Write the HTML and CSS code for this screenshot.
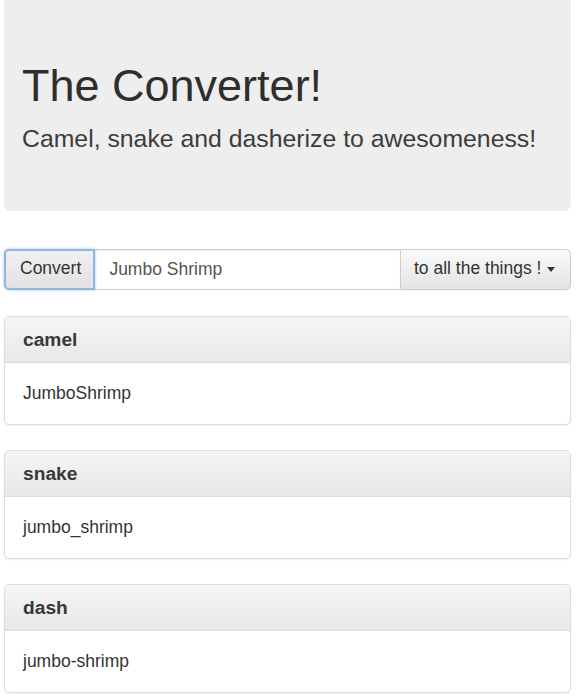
FILE: index.html
```html
<!DOCTYPE html>
<html>
<head>
<meta charset="utf-8">
<title>The Converter!</title>
<link rel="stylesheet" href="styles.css">
</head>
<body>
<div class="container">
  <div class="jumbotron">
    <h1 class="title">The Converter!</h1>
    <p class="lead">Camel, snake and dasherize to awesomeness!</p>
  </div>

  <div class="input-group">
    <button class="btn btn-convert" type="button">Convert</button>
    <input class="field" type="text" value="Jumbo Shrimp">
    <button class="btn btn-dropdown" type="button">to all the things ! <span class="caret"></span></button>
  </div>

  <div class="panel">
    <div class="panel-heading"><h3 class="panel-title">camel</h3></div>
    <div class="panel-body">JumboShrimp</div>
  </div>
  <div class="panel">
    <div class="panel-heading"><h3 class="panel-title">snake</h3></div>
    <div class="panel-body">jumbo_shrimp</div>
  </div>
  <div class="panel">
    <div class="panel-heading"><h3 class="panel-title">dash</h3></div>
    <div class="panel-body">jumbo-shrimp</div>
  </div>
</div>
</body>
</html>
```

FILE: styles.css
```css
* { box-sizing: border-box; }
html, body { margin: 0; padding: 0; background: #fff; }
body {
  font-family: "Liberation Sans", Arial, sans-serif;
  color: #333;
  font-size: 17.5px;
}
.container {
  padding: 0 8px 0 4px;
}
.jumbotron {
  background: #eeeeee;
  border-radius: 0 0 7px 7px;
  padding: 61px 18px 54px;
  margin-bottom: 38px;
}
.title {
  margin: 0 0 11.5px;
  font-size: 45px;
  line-height: 1.1;
  font-weight: normal;
  color: #2e2e2e;
}
.lead {
  margin: 0;
  font-size: 24.8px;
  line-height: 1.4;
  font-weight: normal;
  color: #3c3c3c;
}
.input-group {
  display: flex;
  height: 41px;
  margin-bottom: 26px;
}
.btn {
  font-family: inherit;
  font-size: 17.5px;
  color: #333;
  border: 1px solid #ccc;
  background: linear-gradient(to bottom, #fafafa 0%, #e4e4e4 100%);
  padding: 0 14.4px;
  height: 41px;
  line-height: 1;
  margin: 0;
}
.btn-convert {
  width: 91px;
  border-radius: 5px 0 0 5px;
  border: 2px solid #8fb8dc;
  box-shadow: 0 0 3px rgba(102, 175, 233, 0.7);
  background: linear-gradient(to bottom, #f0f0f0 0%, #e2e2e2 100%);
  position: relative;
  z-index: 1;
  padding: 0 12px 0 14px;
}
.field {
  flex: 1;
  min-width: 0;
  height: 41px;
  border: 1px solid #ccc;
  border-left: 0;
  border-right: 0;
  padding: 0 14.4px;
  font-family: inherit;
  font-size: 17.5px;
  color: #555;
  background: #fff;
  box-shadow: inset 0 1px 1px rgba(0, 0, 0, 0.075);
  outline: none;
}
.btn-dropdown {
  width: 171px;
  border-radius: 0 5px 5px 0;
  text-align: left;
  padding-left: 13px;
  white-space: nowrap;
  box-shadow: 0 1px 1px rgba(0, 0, 0, 0.06);
}
.caret {
  display: inline-block;
  width: 0;
  height: 0;
  margin-left: 1px;
  vertical-align: middle;
  border-top: 5px solid #333;
  border-left: 4px solid transparent;
  border-right: 4px solid transparent;
}
.panel {
  border: 1px solid #dddddd;
  border-radius: 5px;
  box-shadow: 0 1px 2px rgba(0, 0, 0, 0.06);
  margin-bottom: 25px;
  background: #fff;
  overflow: hidden;
}
.panel-heading {
  background: linear-gradient(to bottom, #f5f5f5 0%, #e8e8e8 100%);
  border-bottom: 1px solid #dddddd;
  padding: 12px 18px;
}
.panel-title {
  margin: 0;
  font-size: 19.2px;
  line-height: 21px;
  font-weight: bold;
  color: #383838;
}
.panel-body {
  padding: 18px 18px;
  line-height: 25px;
  font-size: 17.5px;
  color: #333;
}
```
